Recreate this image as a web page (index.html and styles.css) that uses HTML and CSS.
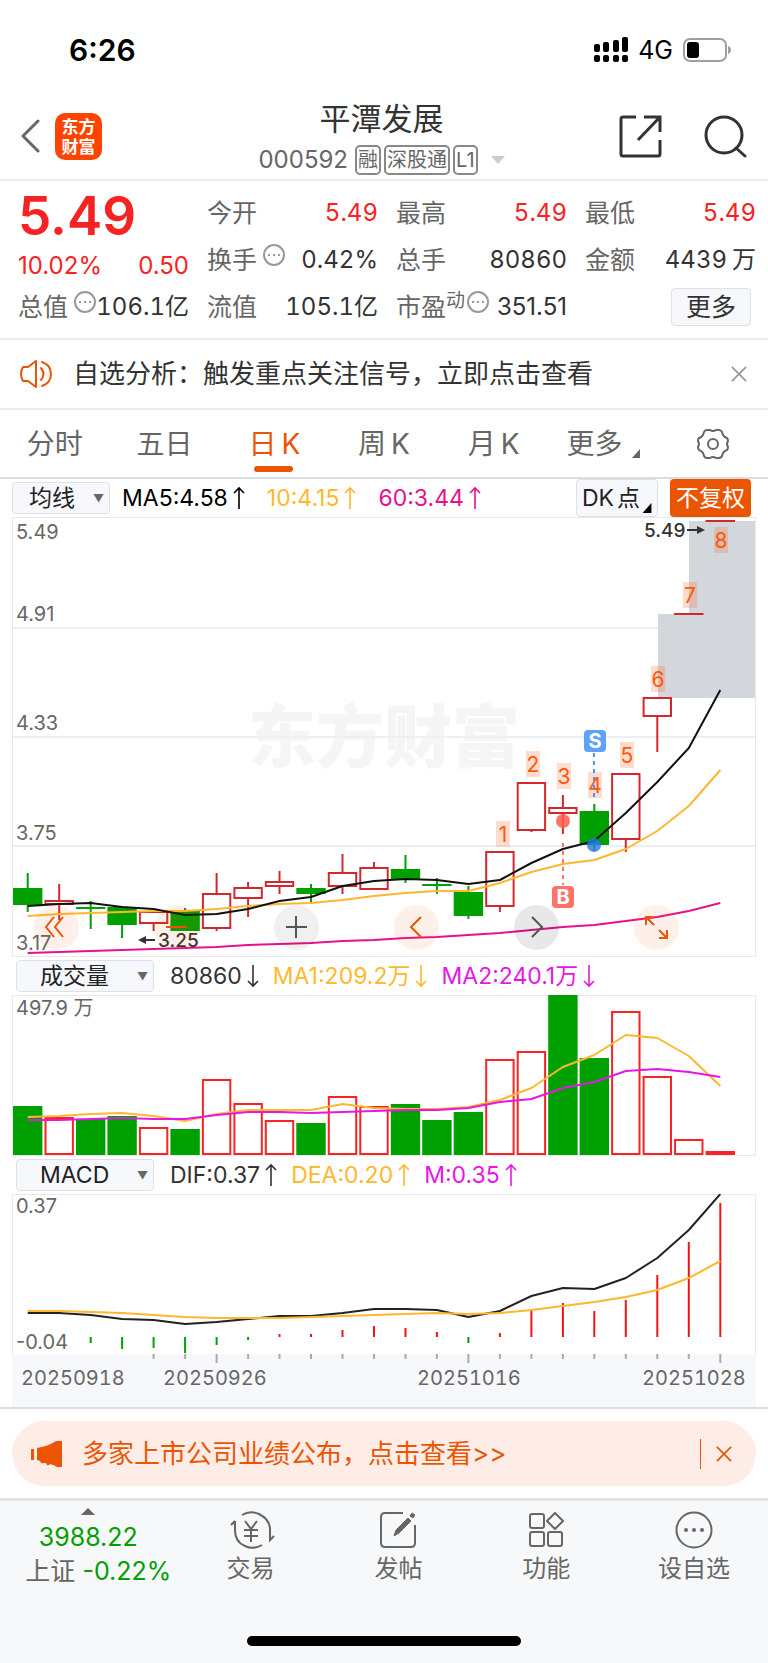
FILE: index.html
```html
<!DOCTYPE html>
<html lang="zh-CN">
<head>
  <meta charset="utf-8">
  <meta name="viewport" content="width=device-width, initial-scale=1">
  <title>平潭发展 000592</title>
  <link rel="stylesheet" href="styles.css">
  <script src="app.js" defer></script>
</head>
<body>
  <svg class="defs" width="0" height="0" aria-hidden="true">
    <symbol id="up" viewBox="0 0 12 24"><path d="M6 23V2M1 7l5-5 5 5"/></symbol>
    <symbol id="down" viewBox="0 0 12 24"><path d="M6 1v21M1 17l5 5 5-5"/></symbol>
    <symbol id="more" viewBox="0 0 22 22">
      <circle cx="11" cy="11" r="10"/>
      <path d="M5 11h2M10 11h2M15 11h2" stroke-width="2"/>
    </symbol>
    <symbol id="close" viewBox="0 0 18 18"><path d="M1 1l16 16M17 1L1 17"/></symbol>
  </svg>

  <div class="status">
    <span class="time">6:26</span>
    <div class="status-right">
      <svg class="signal" width="34" height="25" viewBox="0 0 34 25">
        <rect x="0" y="7" width="6" height="8" rx="2"/><rect x="9" y="5" width="6" height="10" rx="2"/>
        <rect x="19" y="3" width="6" height="12" rx="2"/><rect x="28" y="0" width="6" height="15" rx="2"/>
        <rect x="0" y="18" width="6" height="7" rx="2"/><rect x="9" y="18" width="6" height="7" rx="2"/>
        <rect x="19" y="18" width="6" height="7" rx="2"/><rect x="28" y="18" width="6" height="7" rx="2"/>
      </svg>
      <span class="net">4G</span>
      <svg width="48" height="24" viewBox="0 0 48 24">
        <rect x="1" y="1" width="42" height="22" rx="6" fill="none" stroke="#a0a0a0" stroke-width="2"/>
        <rect x="4" y="4" width="12" height="16" rx="3"/>
        <path d="M45 8q3 1 3 4t-3 4z" fill="#a0a0a0"/>
      </svg>
    </div>
  </div>

  <header class="header">
    <div class="header-side">
      <button class="icon-btn" aria-label="返回">
        <svg width="20" height="34" viewBox="0 0 20 34"><path d="M18 2L3 17l15 15" fill="none" stroke="#666" stroke-width="3" stroke-linecap="round" stroke-linejoin="round"/></svg>
      </button>
      <a class="logo" href="#">东方<br>财富</a>
    </div>
    <div class="header-title">
      <h1>平潭发展</h1>
      <div class="code">
        <span class="num">000592</span>
        <span class="tag">融</span><span class="tag">深股通</span><span class="tag">L1</span>
        <svg class="caret" width="14" height="8" viewBox="0 0 14 8"><path d="M0 0h14L7 8z" fill="#ccc"/></svg>
      </div>
    </div>
    <div class="header-side header-actions">
      <button class="icon-btn" aria-label="分享">
        <svg width="43" height="43" viewBox="0 0 43 43" fill="none" stroke="#333" stroke-width="3">
          <path d="M17 2H4Q2 2 2 4v35q0 2 2 2h35q2 0 2-2V25M25 2h16v15M40 3L19 25"/>
        </svg>
      </button>
      <button class="icon-btn" aria-label="搜索">
        <svg width="43" height="43" viewBox="0 0 43 43" fill="none" stroke="#333" stroke-width="3"><circle cx="20" cy="20" r="18"/><path d="M32 33l9 8" stroke-linecap="round"/></svg>
      </button>
    </div>
  </header>

  <section class="quote">
    <div class="price">
      <div class="last">5.49</div>
      <div class="change"><span>10.02%</span><span>0.50</span></div>
      <div class="cell"><span class="label">总值<svg class="more"><use href="#more"/></svg></span><span class="value">106.1亿</span></div>
    </div>
    <div class="cells">
      <div class="cell"><span class="label">今开</span><span class="value red">5.49</span></div>
      <div class="cell"><span class="label">换手<svg class="more"><use href="#more"/></svg></span><span class="value">0.42%</span></div>
      <div class="cell"><span class="label">流值</span><span class="value">105.1亿</span></div>
    </div>
    <div class="cells">
      <div class="cell"><span class="label">最高</span><span class="value red">5.49</span></div>
      <div class="cell"><span class="label">总手</span><span class="value">80860</span></div>
      <div class="cell"><span class="label">市盈<sup>动</sup><svg class="more flush"><use href="#more"/></svg></span><span class="value narrow">351.51</span></div>
    </div>
    <div class="cells">
      <div class="cell"><span class="label">最低</span><span class="value red">5.49</span></div>
      <div class="cell"><span class="label">金额</span><span class="value">4439<i class="thin"></i>万</span></div>
      <div class="cell end"><button class="more-btn">更多</button></div>
    </div>
  </section>

  <section class="notice">
    <svg width="33" height="28" viewBox="0 0 33 28" fill="none" stroke="#ea5504" stroke-width="2" stroke-linejoin="round">
      <path d="M16 1v26l-8-6H3q-2-3-2-7t2-7h5z"/>
      <path d="M21 8q5 6 0 12M22 2q9 3 9 12t-9 12" stroke-linecap="round"/>
    </svg>
    <a href="#">自选分析：触发重点关注信号，立即点击查看</a>
    <button class="icon-btn" aria-label="关闭"><svg class="close"><use href="#close"/></svg></button>
  </section>

  <nav class="tabs">
    <button>分时</button>
    <button>五日</button>
    <button class="active">日<i class="thin"></i>K</button>
    <button>周<i class="thin"></i>K</button>
    <button>月<i class="thin"></i>K</button>
    <button>更多<svg class="corner" width="8" height="9" viewBox="0 0 8 9"><path d="M8 0v9H0z"/></svg></button>
    <button aria-label="设置">
      <svg width="32" height="30" viewBox="0 0 32 30" fill="none" stroke="#666" stroke-width="2" stroke-linejoin="round">
        <path d="M10 1h3q3 2 6 0h3q2 0 3 2l1 3q1 2 4 3q1 1 1 3q-2 3 0 6q0 2-1 3q-3 1-4 3l-1 3q-1 2-3 2h-3q-3-2-6 0h-3q-2 0-3-2l-1-3q-1-2-4-3q-1-1-1-3q2-3 0-6q0-2 1-3q3-1 4-3l1-3q1-2 3-2z"/>
        <circle cx="16" cy="15" r="5"/>
      </svg>
    </button>
  </nav>

  <div class="legend legend-main">
    <button class="picker">均线<span>▼</span></button>
    <span>MA5:4.58<svg class="arrow"><use href="#up"/></svg></span>
    <span class="yellow">10:4.15<svg class="arrow"><use href="#up"/></svg></span>
    <span class="pink">60:3.44<svg class="arrow"><use href="#up"/></svg></span>
    <button class="dk">DK<i class="thin"></i>点<svg class="corner" width="10" height="10" viewBox="0 0 8 9"><path d="M8 0v9H0z"/></svg></button>
    <button class="adjust">不复权</button>
  </div>

  <div class="chart">
    <svg id="kline" viewBox="0 0 744 440" role="img" aria-label="日K线"></svg>
    <div class="tools">
      <button class="warm" aria-label="最左"><svg viewBox="0 0 45 45"><path d="M20 12L12 22l8 10M29 12l-8 10 8 10"/></svg></button>
      <button class="warm" aria-label="缩小"><svg viewBox="0 0 45 45"><path d="M12 22h21"/></svg></button>
      <button aria-label="放大"><svg viewBox="0 0 45 45"><path d="M12 22h21M22 11v22"/></svg></button>
      <button class="warm" aria-label="左移"><svg viewBox="0 0 45 45"><path d="M27 12L17 22l10 10"/></svg></button>
      <button class="dark" aria-label="右移"><svg viewBox="0 0 45 45"><path d="M18 12l10 10-10 10"/></svg></button>
      <button class="warm" aria-label="全屏"><svg viewBox="0 0 45 45"><path d="M12 20v-8h8M12 12l8 8M25 33h8v-8M33 33l-8-8"/></svg></button>
    </div>
  </div>

  <div class="legend">
    <button class="picker wide">成交量<span>▼</span></button>
    <span>80860<svg class="arrow"><use href="#down"/></svg></span>
    <span class="yellow">MA1:209.2万<svg class="arrow"><use href="#down"/></svg></span>
    <span class="magenta">MA2:240.1万<svg class="arrow"><use href="#down"/></svg></span>
  </div>
  <div class="chart"><svg id="volume" viewBox="0 0 744 161" role="img" aria-label="成交量"></svg></div>

  <div class="legend">
    <button class="picker wide">MACD<span>▼</span></button>
    <span>DIF:0.37<svg class="arrow"><use href="#up"/></svg></span>
    <span class="yellow">DEA:0.20<svg class="arrow"><use href="#up"/></svg></span>
    <span class="magenta">M:0.35<svg class="arrow"><use href="#up"/></svg></span>
  </div>
  <div class="chart"><svg id="macd" viewBox="0 0 744 160" role="img" aria-label="MACD"></svg></div>
  <div class="chart axis"><svg id="axis" viewBox="0 0 744 53"></svg></div>

  <section class="banner-wrap">
    <div class="banner">
      <svg width="31" height="26" viewBox="0 0 31 26" fill="#ea5504"><path d="M0 8h3v11H0zM6 7q12-2 19-7h6v26h-5q-3-2-7-3-1 2-3 1l-1-2h-3q-2 1-3-2L6 19z"/></svg>
      <a href="#">多家上市公司业绩公布，点击查看&gt;&gt;</a>
      <button class="icon-btn" aria-label="关闭"><svg class="close"><use href="#close"/></svg></button>
    </div>
  </section>

  <footer class="footer">
    <nav class="footer-nav">
      <a class="index" href="#">
        <svg width="14" height="7" viewBox="0 0 14 7"><path d="M7 0l7 7H0z" fill="#666"/></svg>
        <span class="green">3988.22</span>
        <span class="index-name">上证 <b class="green">-0.22%</b></span>
      </a>
      <a href="#">
        <svg viewBox="0 0 42 38"><path d="M12 4q8-5 17-1 12 6 11 18v8l4-4M5 10l-4 4M5 10v9q0 12 10 16 8 4 17-1M15 10l6 8 6-8M14 19h14M14 25h14M21 18v13"/></svg>
        交易
      </a>
      <a href="#">
        <svg viewBox="0 0 42 38"><path d="M26 2H8Q4 2 4 6v26q0 4 4 4h26q4 0 4-4V14"/><path d="M17 25l2-6L31 7l3 3-12 12zM33 5l2-3 3 2-2 3z" fill="#666" stroke-width="1"/></svg>
        发帖
      </a>
      <a href="#">
        <svg viewBox="0 0 42 38"><rect x="5" y="3" width="14" height="14" rx="2"/><rect x="5" y="21" width="14" height="14" rx="2"/><rect x="23" y="21" width="14" height="14" rx="2"/><path d="M30 2l8 8-8 8-8-8z" stroke-linejoin="round"/></svg>
        功能
      </a>
      <a href="#">
        <svg viewBox="0 0 42 38"><circle cx="21" cy="19" r="17.5"/><g fill="#666" stroke="none"><circle cx="13" cy="19" r="2"/><circle cx="21" cy="19" r="2"/><circle cx="29" cy="19" r="2"/></g></svg>
        设自选
      </a>
    </nav>
    <div class="home-bar"></div>
  </footer>
</body>
</html>
```
FILE: styles.css
```css
* {
  box-sizing: border-box;
}

body {
  display: flex;
  flex-direction: column;
  min-height: 100vh;
  margin: 0;
  background: #fff;
  color: #333;
  font-family: Inter, "Noto Sans CJK SC", sans-serif;
  font-size: 24px;
  line-height: 32px;
}

button {
  border: none;
  background: none;
  padding: 0;
  font: inherit;
  color: inherit;
  cursor: pointer;
}

a {
  color: inherit;
  text-decoration: none;
}

svg {
  display: block;
  flex-shrink: 0;
}

.defs {
  position: absolute;
}

.thin {
  display: inline-block;
  width: 5px;
}

.red {
  color: #f52323;
}

.green {
  color: #00a000;
}

.yellow {
  color: #ffb72e;
}

.pink {
  color: #e6118c;
}

.magenta {
  color: #e617e6;
}

/* status bar */

.status {
  display: flex;
  justify-content: space-between;
  align-items: center;
  height: 99px;
  padding: 0 37px 0 69px;
}

.time {
  font-size: 30px;
  font-weight: 600;
  color: #000;
}

.status-right {
  display: flex;
  align-items: center;
  gap: 10px;
  color: #000;
}

.net {
  font-size: 25px;
}

/* header */

.header {
  display: flex;
  justify-content: space-between;
  align-items: center;
  height: 82px;
  padding: 0 21px 0 20px;
  border-bottom: 2px solid #ececec;
}

.header-side {
  display: flex;
  align-items: center;
  gap: 15px;
  width: 127px;
  padding-bottom: 6px;
}

.header-actions {
  gap: 42px;
  justify-content: flex-end;
}

.icon-btn {
  flex-shrink: 0;
}

.logo {
  display: block;
  width: 47px;
  height: 47px;
  padding: 4px 0;
  border-radius: 10px;
  background: #ff4400;
  color: #fff;
  font-size: 17px;
  font-weight: 700;
  line-height: 20px;
  text-align: center;
}

.header-title {
  padding-right: 4px;
  text-align: center;
}

.header-title h1 {
  margin: 0;
  font-size: 31px;
  font-weight: 400;
  line-height: 42px;
}

.code {
  display: flex;
  align-items: center;
  justify-content: center;
  gap: 3px;
  height: 40px;
  color: #666;
}

.code .num {
  margin-right: 4px;
  font-size: 24px;
}

.tag {
  padding: 0 1px;
  border: 2px solid #888;
  border-radius: 5px;
  font-size: 20px;
  line-height: 26px;
}

.caret {
  margin-left: 10px;
}

/* quote */

.quote {
  display: grid;
  grid-template-columns: repeat(4, minmax(0, 1fr));
  gap: 18px;
  height: 159px;
  padding: 8px 12px 0 18px;
  border-bottom: 2px solid #ececec;
}

.last {
  height: 54px;
  color: #f52323;
  font-size: 53px;
  font-weight: 600;
  line-height: 54px;
}

.change {
  display: flex;
  justify-content: space-between;
  height: 40px;
  color: #f52323;
  line-height: 46px;
}

.cell {
  display: flex;
  justify-content: space-between;
  align-items: center;
  height: 47px;
  white-space: nowrap;
}

.cell.end {
  justify-content: flex-end;
}

.label {
  display: flex;
  align-items: center;
  color: #666;
  font-size: 25px;
}

.label sup {
  align-self: flex-start;
  font-size: 19px;
  line-height: 20px;
}

.value {
  font-variant-numeric: tabular-nums;
}

.value.narrow {
  font-variant-numeric: normal;
}

.more {
  width: 22px;
  height: 22px;
  margin: 0 0 10px 6px;
  fill: none;
  stroke: #999;
  stroke-width: 2;
}

.more.flush {
  margin-left: 2px;
}

.more-btn {
  width: 80px;
  height: 38px;
  margin-right: 5px;
  border: 1px solid #dfe1e8;
  border-radius: 4px;
  background: #f7f8fb;
  font-size: 25px;
}

/* notice */

.notice {
  display: flex;
  align-items: center;
  height: 70px;
  padding: 0 21px 0 20px;
  border-bottom: 2px solid #ececec;
  font-size: 26px;
}

.notice a,
.banner a {
  flex: 1;
  margin-left: 20px;
}

.close {
  width: 16px;
  height: 16px;
  fill: none;
  stroke: #999;
  stroke-width: 2;
}

/* tabs */

.tabs {
  display: flex;
  height: 69px;
  border-bottom: 2px solid #dcdde3;
  color: #666;
  font-size: 28px;
}

.tabs button {
  flex: 1;
  display: flex;
  align-items: center;
  justify-content: center;
  position: relative;
}

.tabs .active {
  color: #ea5504;
}

.tabs .active::after {
  content: "";
  position: absolute;
  left: 50%;
  bottom: 5px;
  width: 39px;
  height: 6px;
  margin-left: -20px;
  border-radius: 3px;
  background: #ea5504;
}

.tabs .corner {
  margin: 20px 0 0 10px;
  fill: #666;
}

/* indicator rows */

.legend {
  display: flex;
  align-items: center;
  gap: 14px;
  height: 38px;
  padding: 0 16px;
  font-size: 23px;
}

.legend-main {
  gap: 12px;
  padding: 0 17px 0 12px;
  color: #000;
}

.legend span {
  display: flex;
  align-items: center;
}

.legend-main > .yellow,
.legend-main > .pink {
  margin-left: 10px;
}

.arrow {
  width: 12px;
  height: 24px;
  margin-left: 5px;
  fill: none;
  stroke: currentColor;
  stroke-width: 1.6;
}

.picker {
  display: flex;
  justify-content: space-between;
  align-items: center;
  width: 98px;
  height: 32px;
  padding: 0 5px 0 16px;
  border: 1px solid #dfe1e8;
  border-radius: 4px;
  background: #f7f8fb;
  color: #222;
}

.picker span {
  color: #666;
  font-size: 11px;
}

.picker.wide {
  width: 138px;
  margin-right: 2px;
  padding-left: 23px;
}

.dk {
  display: flex;
  align-items: center;
  height: 38px;
  margin-left: auto;
  padding: 0 5px;
  border: 1px solid #dfe1e8;
  border-radius: 4px;
  background: #f7f8fb;
  color: #222;
}

.dk .thin {
  width: 3px;
}

.dk .corner {
  margin: 20px 0 0 2px;
}

.adjust {
  width: 81px;
  height: 38px;
  border-radius: 4px;
  background: #ea5504;
  color: #fff;
}

/* charts */

.chart {
  position: relative;
  margin: 0 12px;
}

.chart > svg {
  width: 100%;
  height: auto;
}

.axis {
  background: #f7f8fb;
}

.frame {
  fill: none;
  stroke: #e8e9ee;
  stroke-width: 1;
}

.grid {
  stroke: #eeeff5;
  stroke-width: 2;
}

.scale {
  fill: #666;
  font-size: 20px;
}

.date {
  fill: #666;
  font-size: 20px;
  font-variant-numeric: tabular-nums;
}

.mark {
  fill: #333;
  font-size: 19px;
  font-weight: 500;
}

.watermark {
  fill: #f5f5f5;
  font-size: 68px;
  font-weight: 900;
}

.gap-area {
  fill: #d3d6db;
}

.line {
  fill: none;
  stroke-width: 2;
  stroke-linejoin: round;
}

.count-bg {
  fill: #ff570a;
  fill-opacity: .2;
}

.count {
  fill: #ff570a;
  font-size: 21px;
  text-anchor: middle;
}

.badge {
  fill: #fff;
  font-size: 20px;
  font-weight: 700;
  text-anchor: middle;
}

.tools {
  position: absolute;
  right: 77px;
  bottom: 7px;
  left: 22px;
  display: flex;
  justify-content: space-between;
}

.tools button {
  width: 45px;
  height: 45px;
  border-radius: 50%;
  background: rgba(0, 0, 0, .06);
}

.tools .dark {
  background: rgba(0, 0, 0, .09);
}

.tools .warm {
  background: rgba(234, 85, 4, .09);
}

.tools svg {
  fill: none;
  stroke: #555;
  stroke-width: 2;
}

.tools .warm svg {
  stroke: #ea5504;
}

/* banner */

.banner-wrap {
  padding: 12px 12px;
  border-top: 2px solid #dcdde3;
}

.banner {
  display: flex;
  align-items: center;
  height: 65px;
  padding: 0 24px 0 19px;
  border-radius: 33px;
  background: #fdede6;
  color: #ea5504;
  font-size: 26px;
}

.banner .icon-btn {
  padding: 7px 0 7px 15px;
  border-left: 1px solid #ea5504;
}

.banner .close {
  stroke: #ea5504;
}

/* footer */

.footer {
  flex: 1;
  border-top: 3px solid #e1e2e5;
  background: #f7f8fa;
}

.footer-nav {
  display: flex;
  height: 135px;
}

.footer-nav a {
  flex: 1;
  display: flex;
  flex-direction: column;
  align-items: center;
  gap: 4px;
  padding-top: 10px;
  color: #666;
}

.footer-nav a > svg {
  width: 42px;
  height: 38px;
  overflow: visible;
  fill: none;
  stroke: #666;
  stroke-width: 2;
}

.footer-nav .index {
  flex: 0 0 23%;
  gap: 2px;
  padding-top: 7px;
  font-size: 25px;
}

.footer-nav .index > svg {
  width: 14px;
  height: 7px;
  margin-bottom: 4px;
  stroke: none;
}

.index-name {
  margin-left: 20px;
}

.index b {
  font-weight: 400;
}

.home-bar {
  width: 274px;
  height: 10px;
  margin: 0 auto 17px;
  border-radius: 5px;
  background: #000;
}
```
FILE: app.js
```javascript
const STEP = 31.48
const FIRST = 15.7
const RED = '#d2282d'
const GREEN = '#00a000'

const x = i => +(FIRST + STEP * i).toFixed(1)

// [rising, high, body top, body bottom, low]
const candles = [
  [0, 356, 371, 388, 395], [1, 367, 383, 388, 403], [0, 384, 390, 392, 412],
  [0, 389, 390, 408, 421], [1, 394, 394, 407, 414], [0, 391, 393, 414, 414],
  [1, 356, 376, 412, 414], [1, 365, 370, 382, 400], [1, 354, 364, 370, 377],
  [0, 367, 371, 377, 386], [1, 337, 355, 370, 377], [1, 345, 350, 373, 373],
  [0, 338, 352, 363, 366], [0, 361, 367, 369, 377], [0, 369, 375, 399, 402],
  [1, 334, 334, 390, 395], [1, 265, 265, 314, 315], [1, 278, 290, 297, 317],
  [0, 287, 294, 328, 334], [1, 256, 256, 323, 335], [1, 180, 180, 200, 235],
  [1, 97, 96, 98, 98], [1, 4, 3, 5, 5]
]
const ma5 = [389, 387, 386, 390, 392, 398, 397, 392, 384, 380, 369, 364, 362, 363, 367, 363, 346, 332, 324, 296, 265, 231, 173]
const ma10 = [399, 397, 396, 395, 394, 394, 392, 389, 387, 386, 383, 379, 376, 374, 374, 366, 355, 347, 343, 332, 314, 289, 253]
const ma60 = [436, 435, 434, 433, 432, 431, 430, 428, 427, 426, 424, 423, 421, 420, 418, 416, 413, 410, 408, 404, 400, 394, 386]

const volumes = [111, 122, 124, 121, 132, 134, 84, 108, 125, 128, 101, 111, 109, 125, 117, 64, 56, 0, 63, 16, 81, 144, 156]
const selling = [0, 2, 3, 5, 9, 12, 13, 14, 17, 18]
const vol5 = [122, 121, 119, 118, 121, 126, 119, 115, 115, 115, 109, 113, 114, 114, 112, 105, 93, 72, 60, 40, 43, 61, 91]
const vol10 = [125, 125, 124, 123, 124, 124, 120, 117, 117, 118, 117, 116, 115, 115, 113, 107, 104, 93, 87, 76, 74, 77, 82]

const dif = [119, 119, 121, 125, 126, 130, 128, 125, 122, 122, 119, 115, 115, 116, 123, 117, 102, 94, 95, 84, 64, 36, 0]
const dea = [117, 117, 118, 119, 121, 123, 124, 124, 124, 123, 122, 121, 120, 119, 120, 119, 116, 112, 108, 103, 96, 84, 67]
const hist = [148, 146, 149, 155, 154, 159, 151, 146, 140, 140, 136, 132, 134, 138, 149, 139, 116, 109, 117, 106, 81, 48, 9]

const line = (points, color) =>
  `<polyline class="line" stroke="${color}" points="${points.map((y, i) => x(i) + ',' + y).join(' ')}"/>`

const box = (i, top, bottom, color, filled) => filled
  ? `<rect x="${x(i) - 14.7}" y="${top}" width="29.4" height="${bottom - top}" fill="${color}"/>`
  : `<rect x="${x(i) - 13.7}" y="${top + 1}" width="27.4" height="${Math.max(bottom - top - 2, 0)}" fill="none" stroke="${color}" stroke-width="2"/>`

const stem = (i, from, to, color) => from === to ? '' :
  `<path d="M${x(i)} ${from}V${to}" stroke="${color}" stroke-width="2"/>`

function candle ([rising, high, top, bottom, low], i) {
  const color = rising ? RED : GREEN
  return stem(i, high, top, color) + stem(i, bottom, low, color) + box(i, top, bottom, color, !rising || bottom - top < 3)
}

function kline () {
  const grid = [111, 220, 329].map(y => `<path class="grid" d="M1 ${y}H743"/>`).join('')
  const scale = [['5.49', 22], ['4.91', 104], ['4.33', 213], ['3.75', 323], ['3.17', 433]]
    .map(([t, y]) => `<text class="scale" x="4" y="${y}">${t}</text>`).join('')
  const counts = [[491, 317], [521, 247], [552, 259], [583, 268], [615, 238], [646, 162], [678, 78], [709, 23]]
    .map(([cx, cy], n) => `<rect class="count-bg" x="${cx - 7}" y="${cy - 13}" width="14" height="26"/>
      <text class="count" x="${cx}" y="${cy + 8}">${n + 1}</text>`).join('')
  return `
    <text class="watermark" x="236" y="245">东方财富</text>
    ${grid}
    <path class="gap-area" d="M677 4h66v177h-97V97h31z"/>
    <path class="frame" d="M.5 .5h743v439H.5z"/>
    ${candles.map(candle).join('')}
    ${line(ma60, '#e6118c')}${line(ma10, '#ffb72e')}${line(ma5, '#111')}
    ${scale}
    <text class="mark" x="146" y="430">3.25</text>
    <path d="M143 423h-13" stroke="#333" stroke-width="2"/><path d="M126 423l8-4v8z" fill="#333"/>
    <text class="mark" x="632" y="20">5.49</text>
    <path d="M675 13h13" stroke="#333" stroke-width="2"/><path d="M693 13l-8-4v8z" fill="#333"/>
    ${counts}
    <path d="M582 236v44" stroke="#4a94f8" stroke-width="2" stroke-dasharray="4 4"/>
    <rect x="572" y="213" width="22" height="22" rx="4" fill="#5fa2fb"/><text class="badge" x="583" y="231">S</text>
    <circle cx="582" cy="328" r="7" fill="#2878e6" fill-opacity=".8"/>
    <path d="M551 326v42" stroke="#ff7467" stroke-width="2" stroke-dasharray="4 4"/>
    <rect x="540" y="369" width="22" height="22" rx="4" fill="#ff7467"/><text class="badge" x="551" y="387">B</text>
    <circle cx="551" cy="304" r="7" fill="#ff5a4b" fill-opacity=".85"/>`
}

function volume () {
  const bars = volumes.map((top, i) => {
    const sell = selling.includes(i)
    return box(i, top, 160, sell ? GREEN : '#f92323', sell)
  }).join('')
  return `<path class="frame" d="M.5 .5h743v160H.5z"/>${bars}
    ${line(vol5, '#ffb72e')}${line(vol10, '#e617e6')}
    <text class="scale" x="4" y="20">497.9 万</text>`
}

function macd () {
  const bars = hist.map((y, i) => stem(i, 143, y, y < 143 ? '#f21414' : GREEN)).slice(2).join('')
  return `<path class="frame" d="M.5 160V.5h743V160"/>${bars}
    ${line(dif, '#222')}${line(dea, '#ffb72e')}
    <text class="scale" x="4" y="19">0.37</text>
    <text class="scale" x="4" y="155">-0.04</text>`
}

function axis () {
  let ticks = ''
  for (let i = 4; i < 23; i++) ticks += stem(i, 0, i % 8 === 6 ? 9 : 5, '#aaa')
  const dates = [['20250918', 9], ['20250926', 151], ['20251016', 405], ['20251028', 630]]
    .map(([t, left]) => `<text class="date" x="${left}" y="31">${t}</text>`).join('')
  return ticks + dates
}

document.getElementById('kline').innerHTML = kline()
document.getElementById('volume').innerHTML = volume()
document.getElementById('macd').innerHTML = macd()
document.getElementById('axis').innerHTML = axis()
```
